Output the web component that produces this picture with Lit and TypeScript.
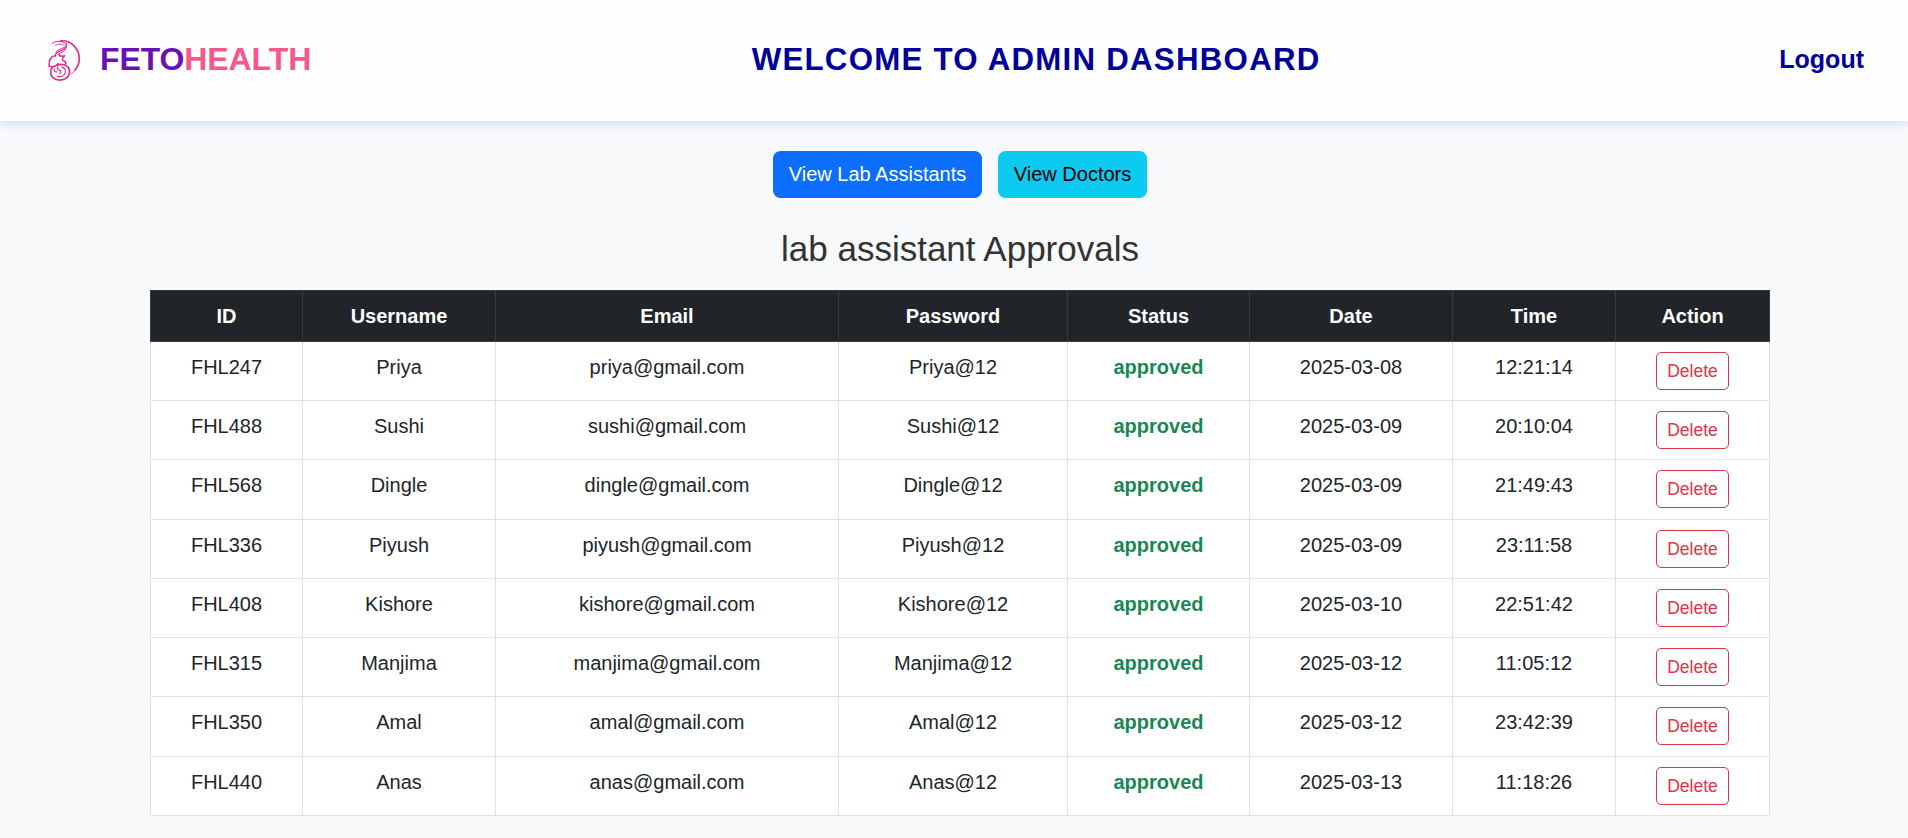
import { LitElement, html, css } from "lit";
import { customElement } from "lit/decorators.js";

interface Assistant {
  id: string;
  name: string;
  email: string;
  password: string;
  date: string;
  time: string;
}

const row = (id: string, name: string, date: string, time: string): Assistant => ({
  id,
  name,
  email: `${name.toLowerCase()}@gmail.com`,
  password: `${name}@12`,
  date,
  time,
});

const ASSISTANTS: Assistant[] = [
  row("FHL247", "Priya", "2025-03-08", "12:21:14"),
  row("FHL488", "Sushi", "2025-03-09", "20:10:04"),
  row("FHL568", "Dingle", "2025-03-09", "21:49:43"),
  row("FHL336", "Piyush", "2025-03-09", "23:11:58"),
  row("FHL408", "Kishore", "2025-03-10", "22:51:42"),
  row("FHL315", "Manjima", "2025-03-12", "11:05:12"),
  row("FHL350", "Amal", "2025-03-12", "23:42:39"),
  row("FHL440", "Anas", "2025-03-13", "11:18:26"),
];

@customElement("site-header")
export class SiteHeader extends LitElement {
  static styles = css`
    :host {
      display: block;
    }
    .bar {
      box-sizing: border-box;
      height: 121px;
      padding: 0 44px 2px 42px;
      display: flex;
      align-items: center;
      justify-content: space-between;
      background: #fefefe;
      box-shadow: 0 2px 10px rgba(0, 80, 150, 0.18);
      font-weight: 700;
      color: #000099;
    }
    .brand {
      display: flex;
      align-items: center;
      width: 251px;
      font-size: 32px;
      letter-spacing: -0.1px;
      color: #6a11b5;
      white-space: nowrap;
    }
    .mark {
      width: 44px;
      height: 50px;
      margin-right: 14px;
      flex: none;
    }
    .pink {
      color: #f4588f;
    }
    .title {
      margin: 0;
      font-size: 31.25px;
      letter-spacing: 1.25px;
      white-space: nowrap;
    }
    .logout {
      font-size: 25px;
      color: #000099;
      text-decoration: none;
    }
  `;

  render() {
    return html`
      <header class="bar">
        <div class="brand">
          <svg class="mark" viewBox="36 43.500 132 150" fill="none" stroke="#e5288c" stroke-linecap="round" stroke-linejoin="round">
            <path stroke-width="3" d="M66 69C76 60 96 60 109 70" />
            <path stroke-width="2.500" d="M76 74C86 69 96 70 103 75" />
            <path stroke-width="5" d="M92 61C122 58 148 84 148 115C148 128 142 140 135 149" />
            <path stroke-width="2.500" d="M135 149C131 155 127 158 123 161" />
            <path stroke-width="4" d="M109 70C112 84 101 87 90 91C80 95 76 100 76 107" />
            <path stroke-width="3" d="M106 79C97 86 83 84 78 96M107 87C103 95 91 94 86 101" />
            <path stroke-width="4.500" d="M76 106C63 106 57 119 57 137C66 141 79 139 84 129" />
            <path stroke-width="4.500" d="M86 101C89 110 96 107 104 106C95 112 95 120 103 122C109 124 108 129 105 133" />
            <path stroke-width="5" d="M68 140C59 148 60 164 70 172C80 181 98 181 109 173C121 164 122 147 112 138C105 131 90 130 80 135" />
            <path stroke-width="3" d="M68 140C72 136 76 136 80 135" />
            <path stroke-width="3.500" d="M84 139C80 145 83 148 88 149C94 151 94 157 89 159M96 139C105 142 108 150 105 158C102 167 92 171 82 167M73 146C71 151 75 156 81 154" />
          </svg>
          <span>FETO</span><span class="pink">HEALTH</span>
        </div>
        <h1 class="title">WELCOME TO ADMIN DASHBOARD</h1>
        <a class="logout">Logout</a>
      </header>
    `;
  }
}

@customElement("approvals-table")
export class ApprovalsTable extends LitElement {
  static styles = css`
    :host {
      display: block;
    }
    .grid {
      width: 1620px;
      table-layout: fixed;
      border-spacing: 0;
      font-size: 20px;
      line-height: 30px;
      text-align: center;
      color: #212529;
      background: #fff;
    }
    .w-id { width: 153px; }
    .w-user { width: 193px; }
    .w-mail { width: 343px; }
    .w-pass { width: 229px; }
    .w-status { width: 182px; }
    .w-date { width: 203px; }
    .w-time { width: 163px; }
    .w-action { width: 154px; }
    th, td {
      box-sizing: border-box;
      padding: 10px 10px 0;
      vertical-align: top;
      border: 0 solid #dee2e6;
      border-width: 0 1px 1px 0;
    }
    th:first-child, td:first-child {
      border-left-width: 1px;
    }
    th {
      height: 52px;
      color: #fff;
      background: #212529;
      border-color: #373b3e;
      border-top-width: 1px;
    }
    td {
      height: 59px;
    }
    tr.tall td {
      height: 60px;
    }
    .approved {
      font-weight: 700;
      color: #198754;
    }
    .delete {
      box-sizing: border-box;
      display: block;
      width: 73px;
      height: 38px;
      margin: 0 auto;
      padding: 0;
      border: 1px solid #dc3545;
      border-radius: 5px;
      background: transparent;
      color: #dc3545;
      font: 17.5px/26px "Liberation Sans", Arial, sans-serif;
    }
  `;

  render() {
    return html`
      <table class="grid">
        <thead>
          <tr>
            <th class="w-id">ID</th>
            <th class="w-user">Username</th>
            <th class="w-mail">Email</th>
            <th class="w-pass">Password</th>
            <th class="w-status">Status</th>
            <th class="w-date">Date</th>
            <th class="w-time">Time</th>
            <th class="w-action">Action</th>
          </tr>
        </thead>
        <tbody>
          ${ASSISTANTS.map(
            (a, i) => html`
              <tr class=${i % 4 === 2 ? "tall" : ""}>
                <td>${a.id}</td>
                <td>${a.name}</td>
                <td>${a.email}</td>
                <td>${a.password}</td>
                <td class="approved">approved</td>
                <td>${a.date}</td>
                <td>${a.time}</td>
                <td><button class="delete">Delete</button></td>
              </tr>
            `,
          )}
        </tbody>
      </table>
    `;
  }
}

@customElement("app-root")
export class AppRoot extends LitElement {
  static styles = css`
    :host {
      display: block;
      box-sizing: border-box;
      height: 838px;
      overflow: hidden;
      background: #f8f9fb;
      font-family: "Liberation Sans", Arial, sans-serif;
    }
    .content {
      padding: 30px 138px 0 150px;
    }
    .actions {
      display: flex;
      justify-content: center;
      gap: 16px;
    }
    .btn {
      box-sizing: border-box;
      height: 47px;
      padding: 0 0 2px;
      border: 0;
      border-radius: 7.5px;
      font: 20px/30px "Liberation Sans", Arial, sans-serif;
      white-space: nowrap;
    }
    .primary {
      width: 209px;
      background: #0d6efd;
      color: #fff;
    }
    .info {
      width: 149px;
      background: #0dcaf0;
      color: #000;
    }
    .heading {
      margin: 30px 0 20px;
      font-size: 35px;
      line-height: 42px;
      font-weight: 400;
      text-align: center;
      color: #333;
    }
  `;

  render() {
    return html`
      <site-header></site-header>
      <main class="content">
        <div class="actions">
          <button class="btn primary">View Lab Assistants</button>
          <button class="btn info">View Doctors</button>
        </div>
        <h2 class="heading">lab assistant Approvals</h2>
        <approvals-table></approvals-table>
      </main>
    `;
  }
}
